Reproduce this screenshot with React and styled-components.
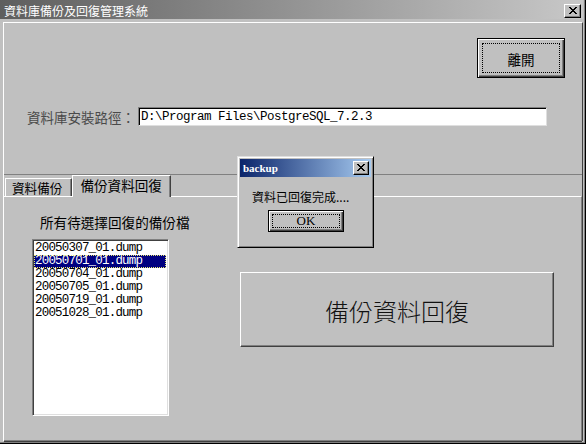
import React from "react";
import styled, { createGlobalStyle } from "styled-components";

const GlobalStyle = createGlobalStyle`
  html, body {
    margin: 0;
    padding: 0;
    background: #c0c0c0;
  }
  body {
    font-family: "Noto Sans CJK TC", "Noto Sans", sans-serif;
  }
`

const files = [
  "20050307_01.dump",
  "20050701_01.dump",
  "20050704_01.dump",
  "20050705_01.dump",
  "20050719_01.dump",
  "20051028_01.dump",
]

const CloseGlyph = () => (
  <svg width="8" height="7" viewBox="0 0 8 7">
    <path d="M0 0h2v1h1v1h2v-1h1v-1h2v1h-1v1h-1v1h-1v1h1v1h1v1h1v1h-2v-1h-1v-1h-2v1h-1v1h-2v-1h1v-1h1v-1h1v-1h-1v-1h-1v-1h-1z" fill="#000" />
  </svg>
)

const App = () => {
  return (
    <React.Fragment>
      <GlobalStyle />
      <Window>
        <TitleBar>
          <TitleText>資料庫備份及回復管理系統</TitleText>
          <CaptionButton>
            <CloseGlyph />
          </CaptionButton>
        </TitleBar>
        <Client>
          <TopArea>
            <ExitRow>
              <ExitButton>
                <FocusRect>離開</FocusRect>
              </ExitButton>
            </ExitRow>
            <PathRow>
              <PathLabel>資料庫安裝路徑：</PathLabel>
              <PathInput readOnly value={"D:\\Program Files\\PostgreSQL_7.2.3"} />
            </PathRow>
          </TopArea>
          <TabStrip>
            <Tab>資料備份</Tab>
            <Tab $active>備份資料回復</Tab>
          </TabStrip>
          <TabPanel>
            <FileColumn>
              <FileLabel>所有待選擇回復的備份檔</FileLabel>
              <FileList>
                {files.map((f, i) => (
                  <FileItem key={f} $selected={i === 1}>{f}</FileItem>
                ))}
              </FileList>
            </FileColumn>
            <RestoreButton>備份資料回復</RestoreButton>
          </TabPanel>
        </Client>
        <Dialog>
          <DialogTitle>
            <DialogTitleText>backup</DialogTitleText>
            <CaptionButton $small>
              <CloseGlyph />
            </CaptionButton>
          </DialogTitle>
          <DialogMessage>資料已回復完成....</DialogMessage>
          <DialogButtons>
            <OkButton>
              <FocusRect $tight>OK</FocusRect>
            </OkButton>
          </DialogButtons>
        </Dialog>
      </Window>
    </React.Fragment>
  )
}

const Window = styled.div`
  position: relative;
  width: 586px;
  height: 444px;
  box-sizing: border-box;
  background: #c0c0c0;
  display: flex;
  flex-direction: column;
  border-right: 1px solid #000;
  border-bottom: 1px solid #000;
  box-shadow: inset -1px -1px 0 #808080;
  padding: 0 2px 2px 0;
  overflow: hidden;
`
const TitleBar = styled.div`
  height: 19px;
  flex: none;
  display: flex;
  align-items: center;
  justify-content: space-between;
  padding: 2px 2px 0 4px;
  box-sizing: border-box;
  background: linear-gradient(to right, #5e5e5e, #c8c8c8);
`
const TitleText = styled.span`
  color: #fff;
  font-size: 12px;
  line-height: 14px;
`
const CaptionButton = styled.div`
  width: ${props => props.$small ? "16px" : "17px"};
  height: 14px;
  box-sizing: border-box;
  background: #c0c0c0;
  border-top: 1px solid #fff;
  border-left: 1px solid #fff;
  border-right: 1px solid #000;
  border-bottom: 1px solid #000;
  box-shadow: inset -1px -1px 0 #808080;
  display: flex;
  align-items: center;
  justify-content: center;
  padding-bottom: 1px;
`
const Client = styled.div`
  flex: 1;
  margin: 3px 0 0 3px;
  display: flex;
  flex-direction: column;
  border-top: 1px solid #fff;
  border-left: 1px solid #fff;
  border-right: 1px solid #404040;
  min-height: 0;
`
const TopArea = styled.div`
  height: 152px;
  flex: none;
  box-sizing: border-box;
  border-bottom: 1px solid #808080;
  display: flex;
  flex-direction: column;
`
const ExitRow = styled.div`
  display: flex;
  justify-content: flex-end;
  padding: 15px 17px 0 0;
`
const ExitButton = styled.div`
  width: 88px;
  height: 40px;
  box-sizing: border-box;
  border: 1px solid #000;
  background: #c0c0c0;
  box-shadow: inset 1px 1px 0 #fff, inset -1px -1px 0 #404040, inset -2px -2px 0 #808080;
  display: flex;
  padding: 4px;
  color: #000;
  font-size: 13.5px;
`
const FocusRect = styled.div`
  flex: 1;
  border: 1px dotted #000;
  display: flex;
  align-items: center;
  justify-content: center;
  font-family: ${props => props.$tight ? '"Liberation Serif", serif' : 'inherit'};
  font-size: ${props => props.$tight ? "13px" : "inherit"};
  padding-top: ${props => props.$tight ? "0" : "1px"};
`
const PathRow = styled.div`
  display: flex;
  align-items: center;
  margin-top: 29px;
  padding-left: 23px;
  gap: 3px;
`
const PathLabel = styled.span`
  color: #4a4a4a;
  font-size: 13.5px;
  line-height: 16px;
`
const PathInput = styled.input`
  width: 409px;
  height: 19px;
  box-sizing: border-box;
  margin: 0;
  padding: 0 2px;
  border: 1px solid;
  border-color: #808080 #dfdfdf #dfdfdf #808080;
  box-shadow: inset 1px 1px 0 #000;
  background: #fff;
  outline: none;
  color: #000;
  font-family: "Liberation Mono", monospace;
  font-size: 12.5px;
  letter-spacing: -0.5px;
`
const TabStrip = styled.div`
  height: 21px;
  flex: none;
  display: flex;
  align-items: flex-end;
  padding-left: 1px;
  position: relative;
  z-index: 1;
`
const Tab = styled.div`
  height: ${props => props.$active ? "22px" : "18px"};
  margin-bottom: ${props => props.$active ? "-1px" : "0"};
  padding: ${props => props.$active ? "0 8px 0 7px" : "0 9px 0 6px"};
  box-sizing: border-box;
  background: #c0c0c0;
  border-top: 1px solid #fff;
  border-left: 1px solid #fff;
  border-right: 1px solid #404040;
  box-shadow: inset -1px 0 0 #808080;
  font-size: ${props => props.$active ? "13.6px" : "12.6px"};
  color: #000;
  display: flex;
  align-items: ${props => props.$active ? "flex-start" : "center"};
  padding-top: 1px;
  line-height: 16px;
`
const TabPanel = styled.div`
  flex: 1;
  min-height: 0;
  border-top: 1px solid #fff;
  border-right: 1px solid #808080;
  border-bottom: 1px solid #808080;
  box-shadow: 0 1px 0 #404040;
  display: flex;
  align-items: flex-start;
  padding-left: 28px;
  gap: 71px;
`
const FileColumn = styled.div`
  width: 137px;
  flex: none;
  display: flex;
  flex-direction: column;
  padding-top: 17px;
`
const FileLabel = styled.div`
  margin-left: 8px;
  font-size: 13.6px;
  line-height: 16px;
  color: #000;
  margin-bottom: 9px;
  white-space: nowrap;
`
const FileList = styled.div`
  width: 137px;
  height: 177px;
  box-sizing: border-box;
  background: #fff;
  border: 1px solid;
  border-color: #808080 #fff #fff #808080;
  box-shadow: inset 1px 1px 0 #404040, inset -1px -1px 0 #dfdfdf;
  padding: 2px 2px 0 1px;
`
const FileItem = styled.div`
  height: 13px;
  box-sizing: border-box;
  padding-left: 1px;
  font-family: "Liberation Mono", monospace;
  font-size: 12.5px;
  letter-spacing: -0.8px;
  line-height: 13px;
  white-space: nowrap;
  color: ${props => props.$selected ? "#fff" : "#000"};
  background: ${props => props.$selected ? "#000080" : "transparent"};
  outline: ${props => props.$selected ? "1px dotted #e8e870" : "none"};
  outline-offset: -1px;
`
const RestoreButton = styled.div`
  margin-top: 75px;
  width: 314px;
  height: 75px;
  box-sizing: border-box;
  background: #c0c0c0;
  border-top: 1px solid #fff;
  border-left: 1px solid #fff;
  border-right: 1px solid #404040;
  border-bottom: 1px solid #404040;
  box-shadow: inset -1px -1px 0 #808080;
  display: flex;
  align-items: center;
  justify-content: center;
  font-size: 24px;
  font-weight: 300;
  color: #111;
  padding-top: 1px;
`
const Dialog = styled.div`
  position: absolute;
  left: 237px;
  top: 156px;
  width: 137px;
  height: 92px;
  box-sizing: border-box;
  background: #c0c0c0;
  border: 1px solid;
  border-color: #dfdfdf #000 #000 #dfdfdf;
  box-shadow: inset 1px 1px 0 #fff, inset -1px -1px 0 #808080;
  padding: 2px;
  display: flex;
  flex-direction: column;
`
const DialogTitle = styled.div`
  height: 18px;
  flex: none;
  display: flex;
  align-items: center;
  justify-content: space-between;
  padding: 0 2px 0 3px;
  background: linear-gradient(to right, #0a246a, #a6caf0);
`
const DialogTitleText = styled.span`
  color: #fff;
  font-family: "Liberation Serif", serif;
  font-weight: bold;
  font-size: 11px;
  line-height: 14px;
`
const DialogMessage = styled.div`
  margin: 12px 0 0 12px;
  font-size: 12px;
  line-height: 16px;
  color: #000;
`
const DialogButtons = styled.div`
  display: flex;
  padding-left: 28px;
  margin-top: 5px;
`
const OkButton = styled(ExitButton)`
  width: 76px;
  height: 22px;
  padding: 3px;
`

export default App
